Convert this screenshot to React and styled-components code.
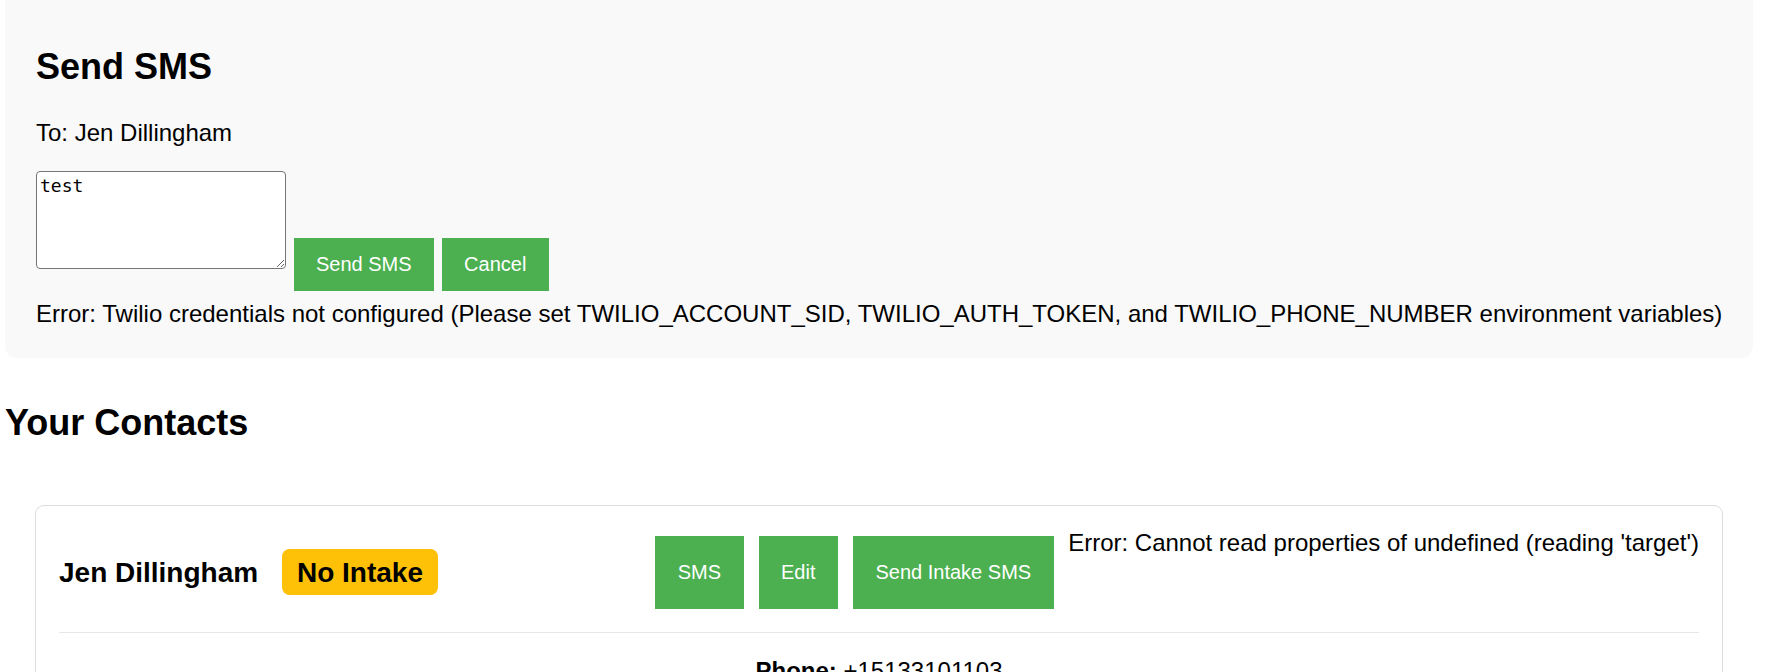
import React from "react";
import styled, { createGlobalStyle } from "styled-components";

const GlobalStyle = createGlobalStyle`
  html, body {
    margin: 0;
    background: #ffffff;
  }
  body {
    font-family: "Liberation Sans", Arial, sans-serif;
    font-size: 24px;
    color: #000;
  }
`;

const Page = styled.div`
  padding: 0 14px 0 5px;
`;

const Panel = styled.section`
  background: #f9f9f9;
  border-radius: 0 0 12px 12px;
  padding: 17px 30px 30px 31px;
`;

const Title = styled.h2`
  font-size: 36px;
  line-height: 41px;
  font-weight: bold;
  margin: ${(p) => p.$top} 0 ${(p) => p.$bottom};
`;

const Recipient = styled.p`
  margin: 0 0 24px;
`;

const ComposeRow = styled.div`
  display: flex;
  align-items: flex-end;
`;

const MessageBox = styled.textarea`
  box-sizing: border-box;
  width: 250px;
  height: 98px;
  margin: 0 0 21.5px;
  padding: 3px 3px;
  font: 18px "DejaVu Sans Mono", "Liberation Mono", monospace;
  color: #000;
  background: #fff;
  border: 1px solid #767676;
  border-radius: 4px;
`;

const Button = styled.button`
  background: #4caf50;
  color: #fff;
  border: none;
  font: 20px "Liberation Sans", Arial, sans-serif;
  line-height: normal;
  padding: 15px 22.5px;
  margin: 0 0 0 7.5px;
  cursor: pointer;
`;

const ErrorLine = styled.div`
  margin-top: 9px;
`;

const ContactsList = styled.div`
  padding: 30px;
`;

const Card = styled.div`
  border: 1px solid #ddd;
  border-radius: 9px;
  padding: 23px;
`;

const CardHeader = styled.div`
  display: flex;
  justify-content: space-between;
  align-items: stretch;
  padding-bottom: 15px;
  border-bottom: 1px solid #e8e8e8;
`;

const Name = styled.h3`
  font-size: 28px;
  line-height: normal;
  font-weight: bold;
  margin: 28px 0;
`;

const Badge = styled.span`
  background: #ffc107;
  padding: 7.5px 15px;
  border-radius: 7.5px;
  margin-left: 16px;
`;

const Actions = styled.div`
  display: flex;
  align-items: stretch;
  flex-shrink: 0;
`;

const ActionButton = styled(Button)`
  margin: 7.5px;
`;

const ActionError = styled.div`
  align-self: flex-start;
  margin-left: 7px;
  white-space: nowrap;
`;

const Detail = styled.p`
  margin: 24px 0;
  text-align: center;
`;

export default function App() {
  return (
    <>
      <GlobalStyle />
      <Page>
        <Panel>
          <Title $top="29px" $bottom="32px">Send SMS</Title>
          <Recipient>To: Jen Dillingham</Recipient>
          <ComposeRow>
            <MessageBox defaultValue="test" />
            <Button>Send SMS</Button>
            <Button>Cancel</Button>
          </ComposeRow>
          <ErrorLine>
            Error: Twilio credentials not configured (Please set TWILIO_ACCOUNT_SID,
            TWILIO_AUTH_TOKEN, and TWILIO_PHONE_NUMBER environment variables)
          </ErrorLine>
        </Panel>

        <Title $top="44px" $bottom="32px">Your Contacts</Title>
        <ContactsList>
          <Card>
            <CardHeader>
              <Name>
                Jen Dillingham{" "}
                <Badge>No Intake</Badge>
              </Name>
              <Actions>
                <ActionButton>SMS</ActionButton>
                <ActionButton>Edit</ActionButton>
                <ActionButton>Send Intake SMS</ActionButton>
                <ActionError>
                  Error: Cannot read properties of undefined (reading 'target')
                </ActionError>
              </Actions>
            </CardHeader>
            <Detail>
              <strong>Phone:</strong> +15133101103
            </Detail>
          </Card>
        </ContactsList>
      </Page>
    </>
  );
}
